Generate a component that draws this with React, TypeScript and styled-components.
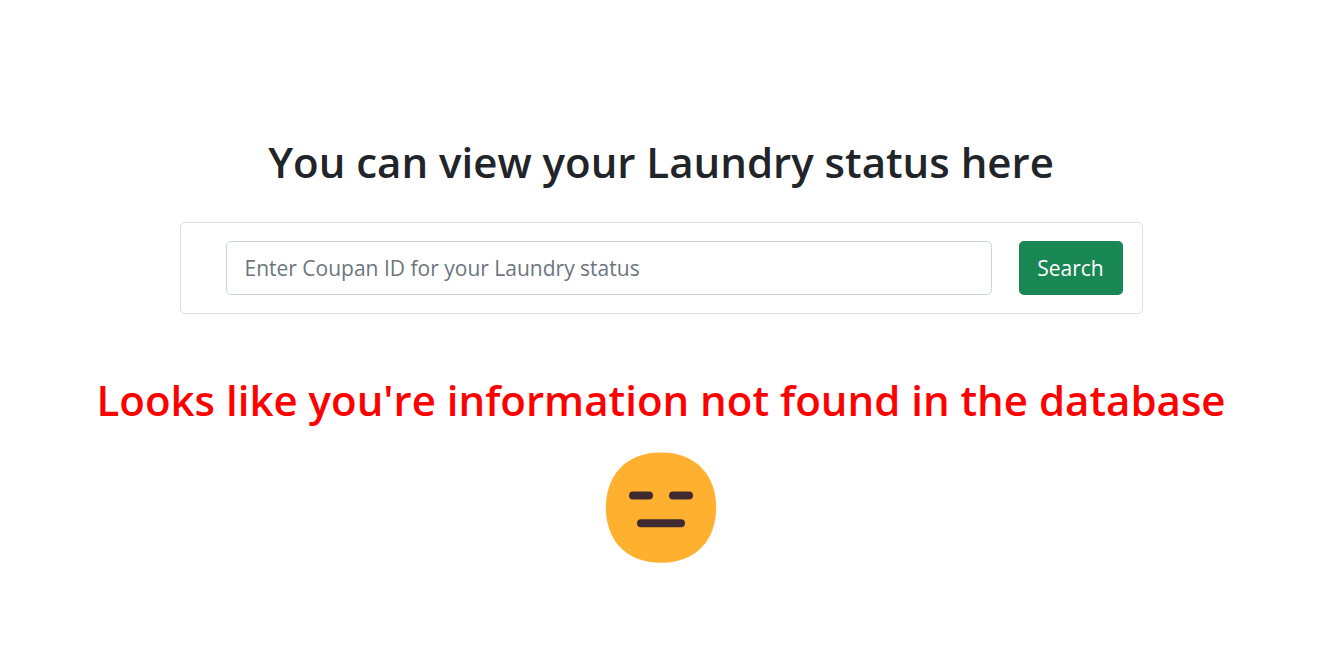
import React from "react";
import styled, { createGlobalStyle } from "styled-components";

const GlobalStyle = createGlobalStyle`
  *, *::before, *::after { box-sizing: border-box; }
  body {
    margin: 0;
    background: #fff;
    color: #212529;
    font-family: "Segoe UI", "Open Sans", "Noto Sans", sans-serif;
  }
`;

const Page = styled.main`
  display: flex;
  flex-direction: column;
  align-items: center;
  padding: 135px 28px 24px 24px;
`;

const Heading = styled.h1<{ $alert?: boolean }>`
  margin: 0;
  font-size: 42px;
  font-weight: 600;
  line-height: 54px;
  text-align: center;
  color: ${({ $alert }) => ($alert ? "#ff0000" : "inherit")};
`;

const SearchCard = styled.form`
  display: flex;
  gap: 27px;
  width: 100%;
  max-width: 963px;
  margin: 33px 0 59px;
  padding: 18px 19px 18px 45px;
  border: 1px solid #dfdfdf;
  border-radius: 5px;
`;

const CouponInput = styled.input`
  flex: 1;
  min-width: 0;
  height: 54px;
  padding: 0 18px;
  border: 1px solid #ced4da;
  border-radius: 5px;
  font: inherit;
  font-size: 21px;
  color: #212529;
  &::placeholder { color: #6c757d; opacity: 1; }
`;

const SearchButton = styled.button`
  width: 104px;
  height: 54px;
  padding: 0;
  border: 0;
  border-radius: 5px;
  background: #198754;
  color: #fff;
  font: inherit;
  font-size: 21px;
  cursor: pointer;
`;

const Face = styled.svg`
  display: block;
  width: 112px;
  height: 112px;
  margin-top: 25px;
`;

export default function App() {
  return (
    <>
      <GlobalStyle />
      <Page>
        <Heading>You can view your Laundry status here</Heading>
        <SearchCard onSubmit={(e) => e.preventDefault()}>
          <CouponInput type="text" aria-label="Coupan ID" placeholder="Enter Coupan ID for your Laundry status" />
          <SearchButton type="submit">Search</SearchButton>
        </SearchCard>
        <Heading as="h2" $alert>Looks like you're information not found in the database</Heading>
        <Face viewBox="0 0 112 112" role="img" aria-label="Expressionless face">
          <path fill="#ffb02e" d="M56 110.800c36.800 0 55.200-24.700 55.200-55.200S92.800.400 56 .400.800 25.100.800 55.600s18.400 55.200 55.200 55.200Z" />
          <path stroke="#402a32" strokeWidth="8" strokeLinecap="round" d="M28 43.500h16M68 43.500h16M36 71.200h40" />
        </Face>
      </Page>
    </>
  );
}
